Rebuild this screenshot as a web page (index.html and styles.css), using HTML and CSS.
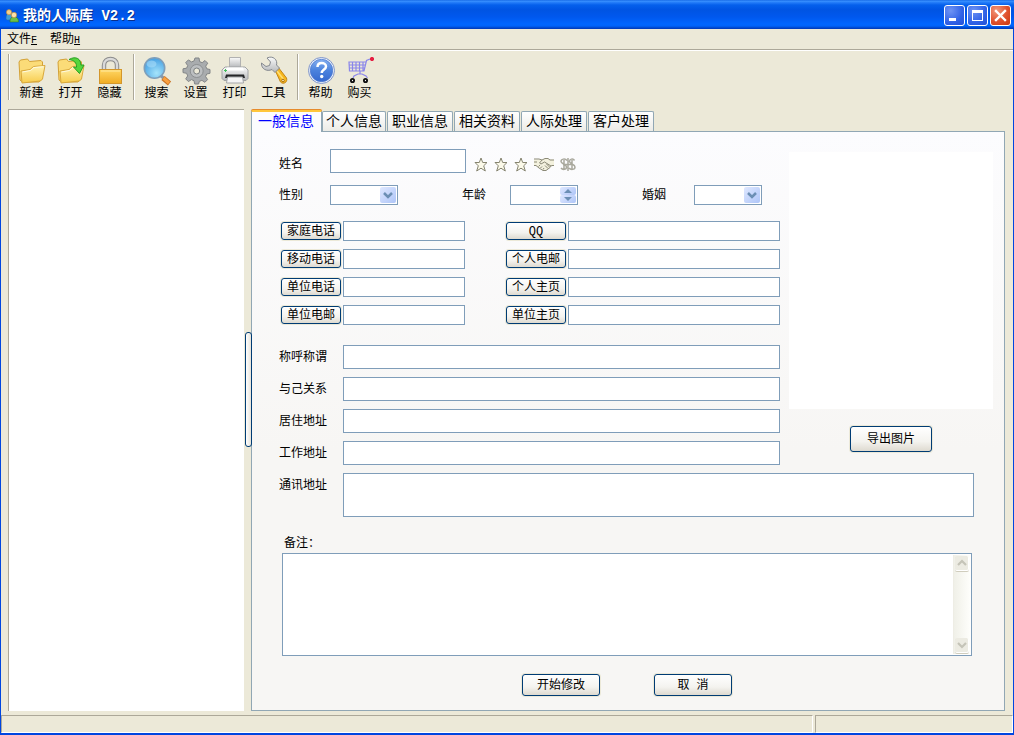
FILE: index.html
```html
<!DOCTYPE html>
<html lang="zh-CN">
<head>
<meta charset="utf-8">
<title>我的人际库 V2.2</title>
<link rel="stylesheet" href="styles.css">
</head>
<body>
<div class="window">
  <header class="titlebar">
    <svg class="app-icon" width="14" height="14" viewBox="0 0 14 14">
      <path d="M1 10c0-4 1-5 3-5s3 1 3 5l-2 1H2z" fill="#3f9bd8" stroke="#2268a8" stroke-width=".5"/>
      <circle cx="4" cy="3.2" r="2.6" fill="#f6cf8a" stroke="#b98330" stroke-width=".6"/>
      <path d="M5 13c0-4 1.500-5 4-5s4.500 1 4.500 5z" fill="#6cc04a" stroke="#2f7d25" stroke-width=".6"/>
      <circle cx="9" cy="6" r="2.700" fill="#fbe0a8" stroke="#b98330" stroke-width=".6"/>
    </svg>
    <h1 class="title">我的人际库 V2.2</h1>
    <div class="win-buttons">
      <button class="win-btn" type="button" aria-label="最小化"><svg width="19" height="19" viewBox="0 0 19 19"><path d="M4 12h7v3H4z" fill="#fff"/></svg></button>
      <button class="win-btn" type="button" aria-label="最大化"><svg width="19" height="19" viewBox="0 0 19 19"><path d="M4 4h11v11H4zM5 7v7h9V7z" fill="#fff" fill-rule="evenodd"/></svg></button>
      <button class="win-btn close" type="button" aria-label="关闭"><svg width="19" height="19" viewBox="0 0 19 19"><path d="M5 5l9 9M14 5l-9 9" stroke="#fff" stroke-width="2.400" stroke-linecap="square"/></svg></button>
    </div>
  </header>

  <nav class="menubar">
    <button class="menu" type="button">文件<u>F</u></button>
    <button class="menu" type="button">帮助<u>H</u></button>
  </nav>

  <svg class="defs" width="0" height="0" aria-hidden="true">
    <defs>
      <linearGradient id="folder" x1="0" y1="0" x2="0" y2="1"><stop offset="0" stop-color="#fff3b4"/><stop offset="1" stop-color="#f8cc4c"/></linearGradient>
      <linearGradient id="gold" x1="0" y1="0" x2="0" y2="1"><stop offset="0" stop-color="#ffd764"/><stop offset="1" stop-color="#f0ab22"/></linearGradient>
      <linearGradient id="silver" x1="0" y1="0" x2="0" y2="1"><stop offset="0" stop-color="#fafafa"/><stop offset="1" stop-color="#b5b7ba"/></linearGradient>
      <radialGradient id="lens" cx=".6" cy=".75" r=".7"><stop offset="0" stop-color="#a5e4fb"/><stop offset="1" stop-color="#4aa3e4"/></radialGradient>
      <linearGradient id="ball" x1="0" y1="0" x2="0" y2="1"><stop offset="0" stop-color="#86b0f0"/><stop offset=".5" stop-color="#4b82dd"/><stop offset="1" stop-color="#3569cf"/></linearGradient>
      <g id="folder-shape">
        <path d="M2 6l1.500-2 7-1 2 2.500L24 4.500l1.500 1.500v4.500L24 24l-2 2H5.500L3 24z" fill="#fbdc78" stroke="#d3a136"/>
        <path d="M4 15l9-1.500 3.500-3 11.500-1-2.500 13.500-2 2L5 27z" fill="url(#folder)" stroke="#d9a83a"/>
        <path d="M5.500 16l8-1.500 3.500-3 9.500-.8" fill="none" stroke="#fffbe0"/>
      </g>
    </defs>
  </svg>

  <div class="toolbar" role="toolbar">
    <span class="grip"></span>
    <button class="tool" type="button"><svg width="30" height="30" viewBox="0 0 30 30"><use href="#folder-shape"/></svg>新建</button>
    <button class="tool" type="button"><svg width="30" height="30" viewBox="0 0 30 30"><use href="#folder-shape"/><path d="M13 3.500C20-.5 25 3 24.800 9H28l-4.500 8.500-6-6.500 3 .3C21 7 18 4 13 3.500z" fill="#55d53c" stroke="#27a021"/></svg>打开</button>
    <button class="tool" type="button"><svg width="30" height="30" viewBox="0 0 30 30"><path d="M9 14V9c0-8 13-8 13 0v5" fill="none" stroke="#8b8b8b" stroke-width="4.400"/><path d="M9 14V9c0-8 13-8 13 0v5" fill="none" stroke="#dadada" stroke-width="2.400"/><rect x="4.500" y="13.500" width="22" height="14" fill="url(#gold)" stroke="#d3962b"/><path d="M6 15h19" stroke="#ffe9a0"/></svg>隐藏</button>
    <span class="sep"></span>
    <button class="tool" type="button"><svg width="30" height="30" viewBox="0 0 30 30"><path d="M18 19l3.500 3" stroke="#8c98a5" stroke-width="3"/><path d="M21 22l6.500 5.500" stroke="#c87020" stroke-width="5"/><path d="M21.500 22l5.500 5" stroke="#f9a040" stroke-width="3.200"/><circle cx="12.500" cy="12" r="10.200" fill="url(#lens)" stroke="#7f9fba" stroke-width="1.600"/><ellipse cx="9.500" cy="8" rx="5" ry="3.500" fill="#a9dcf8" opacity=".6"/></svg>搜索</button>
    <button class="tool" type="button"><svg width="30" height="30" viewBox="0 0 30 30"><path d="M14 2h4l.6 3.600 2.600 1.100L24 4.500l2.700 2.700-2 3 1.100 2.600 3.200.7v3.800l-3.300.7-1.100 2.600 2 3-2.700 2.700-3-2-2.600 1.100L17.600 28h-3.900L13 24.700l-2.600-1.100-3 2-2.700-2.700 2-3L5.600 17.300 2 16.600v-3.800l3.600-.6 1.100-2.600-2-3 2.700-2.700 3 2L13 5z" fill="#a9acae" stroke="#828587"/><circle cx="15.700" cy="15" r="6.500" fill="#bcbfc1" stroke="#8c8f91"/><circle cx="15.700" cy="15" r="3" fill="#ece9d8" stroke="#7d8082"/></svg>设置</button>
    <button class="tool" type="button"><svg width="30" height="30" viewBox="0 0 30 30"><path d="M9.500 1.500h11v10h-11z" fill="url(#silver)" stroke="#b1b1b1"/><path d="M5 11h20l3 3v8.500l-2 2H4l-2-2V14z" fill="url(#silver)" stroke="#a0a2a4"/><path d="M7 11.500h16l1 3H6z" fill="#fff"/><path d="M6 18.500h18l1 3.500H5z" fill="#252628"/><path d="M7.500 21h15l1 6h-17z" fill="#f5f5f5" stroke="#a4a6a8"/><path d="M4 14.500h3M5.500 13v3" stroke="#42bd5b"/></svg>打印</button>
    <button class="tool" type="button"><svg width="30" height="30" viewBox="0 0 30 30"><path d="M16 14l3-3 8.500 11c1.500 4-3 7-6 4z" fill="#f7b71d" stroke="#c28518"/><path d="M18 15l7 9" stroke="#ffdf74" stroke-width="1.600"/><path d="M8 2c6-3 11 2 9.500 7l3 3-4.500 4.500-3-3C8 16 2 13 2.500 7L7 10.500l3.500-1 1-3.500z" fill="url(#silver)" stroke="#85898f"/><circle cx="24" cy="24.500" r="1.300" fill="#fff0b0" stroke="#a96c0d"/></svg>工具</button>
    <span class="sep"></span>
    <button class="tool" type="button"><svg width="30" height="30" viewBox="0 0 30 30"><circle cx="15.500" cy="14.500" r="13" fill="#e6eefb" stroke="#8095c8"/><circle cx="15.500" cy="14.500" r="11.200" fill="url(#ball)" stroke="#4a76cd" stroke-width=".7"/><path d="M11.500 11c0-5.500 8.500-5 8.500-.5 0 3-4.300 3-4.300 6.500" fill="none" stroke="#fff" stroke-width="2.500"/><circle cx="15.700" cy="20.500" r="1.700" fill="#fff"/></svg>帮助</button>
    <button class="tool" type="button"><svg width="30" height="30" viewBox="0 0 30 30"><path d="M25 3l-3.500 1.500L19 15H4.500L4 6h17M4 9h16.500M4 12h15.500M7.500 6v9M11 6v9M14.500 6v9M18 6v9M8 22l1-2 4-2h4l4 2 1.500 2M15 15v3" fill="none" stroke="#8a86ea" stroke-width="1.200"/><path d="M27 1v4M25 3h4" stroke="#e51f43" stroke-width="2.400"/><circle cx="7.500" cy="24.500" r="1.600" fill="#fff" stroke="#111" stroke-width="1.900"/><circle cx="20.500" cy="24.500" r="1.600" fill="#fff" stroke="#111" stroke-width="1.900"/></svg>购买</button>
  </div>

  <main class="workspace">
    <aside class="tree" aria-label="列表"></aside>
    <div class="splitter"><button class="handle" type="button" aria-label="折叠"></button></div>
    <section class="pages">
      <div class="tabs" role="tablist">
        <button class="tab active" type="button" role="tab" aria-selected="true">一般信息</button>
        <button class="tab" type="button" role="tab">个人信息</button>
        <button class="tab" type="button" role="tab">职业信息</button>
        <button class="tab" type="button" role="tab">相关资料</button>
        <button class="tab" type="button" role="tab">人际处理</button>
        <button class="tab" type="button" role="tab">客户处理</button>
      </div>
      <form class="panel">
        <div class="upper">
          <div class="fields">
            <div class="name-row">
              <label for="name">姓名</label>
              <input id="name" class="box tall" type="text">
              <div class="marks">
                <svg width="14" height="15" viewBox="0 0 14 15"><path d="M7 1l1.700 4.500H13L9.700 8.800 11.300 14 7 11.200 2.700 14l1.600-5.200L1 5.500h4.300z" fill="#fbf9e9" stroke="#85836f"/></svg>
                <svg width="14" height="15" viewBox="0 0 14 15"><path d="M7 1l1.700 4.500H13L9.700 8.800 11.300 14 7 11.200 2.700 14l1.600-5.200L1 5.500h4.300z" fill="#fbf9e9" stroke="#85836f"/></svg>
                <svg width="14" height="15" viewBox="0 0 14 15"><path d="M7 1l1.700 4.500H13L9.700 8.800 11.300 14 7 11.200 2.700 14l1.600-5.200L1 5.500h4.300z" fill="#fbf9e9" stroke="#85836f"/></svg>
                <svg width="20" height="15" viewBox="0 0 20 15"><path d="M0 2.500h6l2 .5 3-1.500h3l2 1h4v6l-3 1-4 3.500-3 .5-5-3-3-2H0z" fill="#f3f1de"/><path d="M0 2h5l3 1 3-1.500h3L16 3h4M0 8.500h2l3 2.500 4 2.500h3l4-3 1.500-2H20M8 3L5.500 6l1.500 1 3.500-2 6.500 4M4.500 9.500L6 8M6.500 11L8 9.500M9 12.500l1-1.500M11 8.500l3 3M12.500 7l3 3M0 5h3" fill="none" stroke="#8b8976"/></svg>
                <svg width="16" height="15" viewBox="0 0 16 15"><path d="M7 3.500C5 1 1 2 1 4.500S6.500 7 6.500 10 2.500 13 1 11M14.500 3.500C13 1 9.500 2 9.500 4.500s5.500 2.500 5.500 5.500-4.500 3-6 1M3 7.500h10M4 3v9M12 3v9M8 1v13" fill="none" stroke="#a9a89d" stroke-width="1.500"/></svg>
              </div>
            </div>
            <div class="basic-row">
              <label for="sex">性别</label>
              <span class="combo"><select id="sex"><option></option><option>男</option><option>女</option></select><svg width="16" height="16" viewBox="0 0 16 16"><path d="M4 6l4 4 4-4" fill="none" stroke="#6c8fb4" stroke-width="2.500"/></svg></span>
              <label for="age" class="second">年龄</label>
              <span class="combo spin"><input id="age" type="number"><span class="arrows"><svg width="16" height="8" viewBox="0 0 16 8"><path d="M4 6l4-4 4 4z" fill="#6c8fb4"/></svg><svg width="16" height="8" viewBox="0 0 16 8"><path d="M4 2l4 4 4-4z" fill="#6c8fb4"/></svg></span></span>
              <label for="marriage" class="second">婚姻</label>
              <span class="combo"><select id="marriage"><option></option><option>已婚</option><option>未婚</option></select><svg width="16" height="16" viewBox="0 0 16 16"><path d="M4 6l4 4 4-4" fill="none" stroke="#6c8fb4" stroke-width="2.500"/></svg></span>
            </div>
            <div class="contacts">
              <button class="btn" type="button">家庭电话</button><input class="box" type="text" aria-label="家庭电话">
              <button class="btn third" type="button">QQ</button><input class="box" type="text" aria-label="QQ">
              <button class="btn" type="button">移动电话</button><input class="box" type="text" aria-label="移动电话">
              <button class="btn third" type="button">个人电邮</button><input class="box" type="text" aria-label="个人电邮">
              <button class="btn" type="button">单位电话</button><input class="box" type="text" aria-label="单位电话">
              <button class="btn third" type="button">个人主页</button><input class="box" type="text" aria-label="个人主页">
              <button class="btn" type="button">单位电邮</button><input class="box" type="text" aria-label="单位电邮">
              <button class="btn third" type="button">单位主页</button><input class="box" type="text" aria-label="单位主页">
            </div>
            <div class="details">
              <label for="call">称呼称谓</label><input id="call" class="box tall" type="text">
              <label for="relation">与己关系</label><input id="relation" class="box tall" type="text">
              <label for="home">居住地址</label><input id="home" class="box tall" type="text">
              <label for="work">工作地址</label><input id="work" class="box tall" type="text">
            </div>
          </div>
          <div class="photo-side">
            <div class="photo"></div>
            <button class="btn export" type="button">导出图片</button>
          </div>
        </div>
        <div class="mail-row">
          <label for="mail">通讯地址</label><textarea id="mail" class="box"></textarea>
        </div>
        <label for="notes" class="notes-label">备注：</label>
        <div class="notes">
          <textarea id="notes"></textarea>
          <div class="scroll" aria-hidden="true">
            <span class="cap"><svg width="14" height="14" viewBox="0 0 14 14"><path d="M3 9l4-4 4 4" fill="none" stroke="#c5c4b8" stroke-width="2.200"/></svg></span>
            <span class="cap"><svg width="14" height="14" viewBox="0 0 14 14"><path d="M3 5l4 4 4-4" fill="none" stroke="#c5c4b8" stroke-width="2.200"/></svg></span>
          </div>
        </div>
        <div class="actions">
          <button class="btn" type="button">开始修改</button>
          <button class="btn" type="button">取 消</button>
        </div>
      </form>
    </section>
  </main>

  <footer class="status"><div class="cell main-cell"></div><div class="cell"></div></footer>
</div>
</body>
</html>
```
FILE: styles.css
```css
* { box-sizing: border-box; }
body {
  margin: 0;
  font: 12px/16px "Liberation Mono", "Noto Sans CJK SC", monospace;
  color: #000;
}
button, input, select, textarea {
  font: inherit;
  color: inherit;
  margin: 0;
  padding: 0;
  border: 0;
  border-radius: 0;
  background: none;
  outline: 0;
  min-width: 0;
}
button { white-space: nowrap; }
label { padding-top: 2px; }
svg { display: block; flex: none; }
.defs { position: absolute; }

.window {
  display: flex;
  flex-direction: column;
  min-height: 100vh;
  background: #ece9d8;
  border: solid #0046e0;
  border-width: 0 1px 2px;
}

/* Title bar */
.titlebar {
  display: flex;
  align-items: center;
  height: 29px;
  padding: 2px 3px 0 5px;
  margin: 0 -1px;
  background: linear-gradient(#0a5ce0 0, #3d95ff 1px, #2a82fb 2px, #0560ec 5px, #0054e3 10px, #0058ee 17px, #0066ff 24px, #0063fa 26px, #0045c8 28px, #0038b8 29px);
}
.title {
  flex: 1;
  margin: 0 0 0 4px;
  padding-top: 1px;
  font-size: 14px;
  line-height: 20px;
  font-weight: bold;
  color: #fff;
  text-shadow: 1px 1px #0a2f8c;
}
.win-buttons { display: flex; gap: 2px; }
.win-btn {
  width: 21px;
  height: 21px;
  border: 1px solid #fff;
  border-radius: 3px;
  background: radial-gradient(circle at 30% 25%, #6e93f4, #3162e6 60%, #2350d6);
}
.win-btn.close { background: radial-gradient(circle at 30% 25%, #f2997c, #e0522f 55%, #c9380f); }

/* Menu and toolbar */
.menubar {
  display: flex;
  gap: 13px;
  height: 21px;
  padding: 2px 6px 0;
  border-bottom: 1px solid #aca899;
}
.menu u { font-size: 10px; }
.toolbar {
  display: flex;
  height: 53px;
  padding: 3px 7px;
  border-top: 1px solid #fff;
}
.tool {
  display: flex;
  flex-direction: column;
  align-items: center;
  width: 39px;
  padding-top: 2px;
}
.grip, .sep {
  width: 2px;
  border-left: 1px solid #aca899;
  border-right: 1px solid #fff;
}
.grip { margin-right: 2px; }
.sep { margin: 0 2px 0 4px; }

/* Workspace */
.workspace {
  flex: 1;
  display: flex;
  padding: 6px 8px 4px 7px;
}
.tree {
  flex: none;
  width: 236px;
  background: #fff;
  border: solid #aca899;
  border-width: 1px 0 0 1px;
}
.splitter {
  flex: none;
  width: 7px;
  display: flex;
  align-items: center;
  padding: 0 0 42px 1px;
}
.handle {
  position: relative;
  z-index: 1;
  flex: none;
  width: 7px;
  height: 115px;
  border: 1px solid #003c74;
  border-radius: 3px;
  background: linear-gradient(90deg, #fff, #e6e3da);
}
.pages { flex: 1; display: flex; flex-direction: column; min-width: 0; }

.tabs { display: flex; align-items: flex-end; gap: 1px; height: 22px; }
.tab {
  width: 66px;
  height: 20px;
  padding-top: 1px;
  font-size: 14px;
  line-height: 18px;
  border: 1px solid #91a7b4;
  border-bottom: 0;
  border-radius: 2px 2px 0 0;
  background: linear-gradient(#fff, #ecebe6);
}
.tab.active {
  position: relative;
  width: 71px;
  height: 22px;
  padding: 0 1px 0 0;
  margin: 0 -1px -1px 0;
  color: #00f;
  border-top: 2px solid #ffc73c;
  background: #fcfcfe;
  box-shadow: 0 -1px #e68b2c;
}
.tab.active + .tab { width: 64px; }

.panel {
  flex: 1;
  padding: 17px 11px 12px 27px;
  border: 1px solid #91a7b4;
  background: linear-gradient(#fcfcfe, #f7f6f4 55%);
}
.upper { display: flex; gap: 9px; }
.fields { flex: 1; min-width: 0; }
.box, .notes, .combo {
  border: 1px solid #7f9db9;
  background: #fff;
}
.box { height: 20px; padding: 0 2px; }
.box.tall { height: 24px; }

.name-row { display: flex; align-items: center; }
.name-row label, .basic-row label { width: 51px; }
.name-row .box { width: 136px; }
.name-row label { padding-top: 8px; }
.marks { display: flex; align-items: center; gap: 6px; padding: 6px 0 0 8px; }

.basic-row { display: flex; align-items: center; margin-top: 12px; }
.basic-row .second { width: 112px; padding-left: 64px; }
.basic-row .second:last-of-type { width: 116px; }
.combo { display: flex; width: 68px; height: 20px; padding: 1px; }
.combo select, .combo input {
  flex: 1;
  width: 48px;
  appearance: none;
  -webkit-appearance: none;
}
.combo input { appearance: textfield; -moz-appearance: textfield; }
.combo input::-webkit-inner-spin-button { display: none; }
.combo > svg, .arrows svg {
  border-radius: 2px;
  background: linear-gradient(135deg, #dfe8ff, #aec5f8);
}

.contacts {
  display: grid;
  grid-template-columns: 60px 122px 99px minmax(0, 1fr);
  column-gap: 2px;
  row-gap: 8px;
  align-items: center;
  margin: 16px 0 20px 2px;
}
.third { margin-left: 39px; }
.btn {
  height: 18px;
  padding-top: 1px;
  line-height: 16px;
  border: 1px solid #003c74;
  border-radius: 3px;
  background: linear-gradient(#fff, #f4f3ef 60%, #dedad0);
  box-shadow: 0 0 0 1px #ece9d8;
}
.details {
  display: grid;
  grid-template-columns: 64px minmax(0, 1fr);
  row-gap: 8px;
  align-items: center;
}
.photo-side {
  width: 204px;
  padding-top: 3px;
  display: flex;
  flex-direction: column;
  align-items: center;
  gap: 17px;
}
.photo { width: 100%; height: 257px; background: #fff; }
.export { width: 82px; height: 26px; }

.mail-row { display: flex; margin: 8px 19px 0 0; }
.mail-row label { width: 64px; padding-top: 5px; }
.mail-row .box { flex: 1; height: 44px; resize: none; }
.notes-label { display: block; margin: 17px 0 1px 5px; }
.notes { display: flex; height: 103px; margin: 0 21px 0 3px; padding: 1px; }
.notes textarea { flex: 1; resize: none; }
.scroll {
  display: flex;
  flex-direction: column;
  justify-content: space-between;
  width: 17px;
  padding: 1px;
  border-left: 1px solid #eeede5;
  background: linear-gradient(90deg, #f0f0e8, #fefefb);
}
.cap {
  border: solid #fff;
  border-width: 0 1px 1px 0;
  border-radius: 2px;
  background: #ecebe2;
  box-shadow: 0 1px #d0cdbd;
}
.actions { display: flex; justify-content: center; gap: 54px; margin: 18px 18px 0 0; }
.actions .btn { width: 78px; height: 22px; }

/* Status bar */
.status { display: flex; gap: 2px; height: 18px; }
.cell {
  width: 198px;
  border: 1px solid #aca899;
  border-right-color: #fff;
  border-bottom-color: #fff;
}
.main-cell { flex: 1; }
```
